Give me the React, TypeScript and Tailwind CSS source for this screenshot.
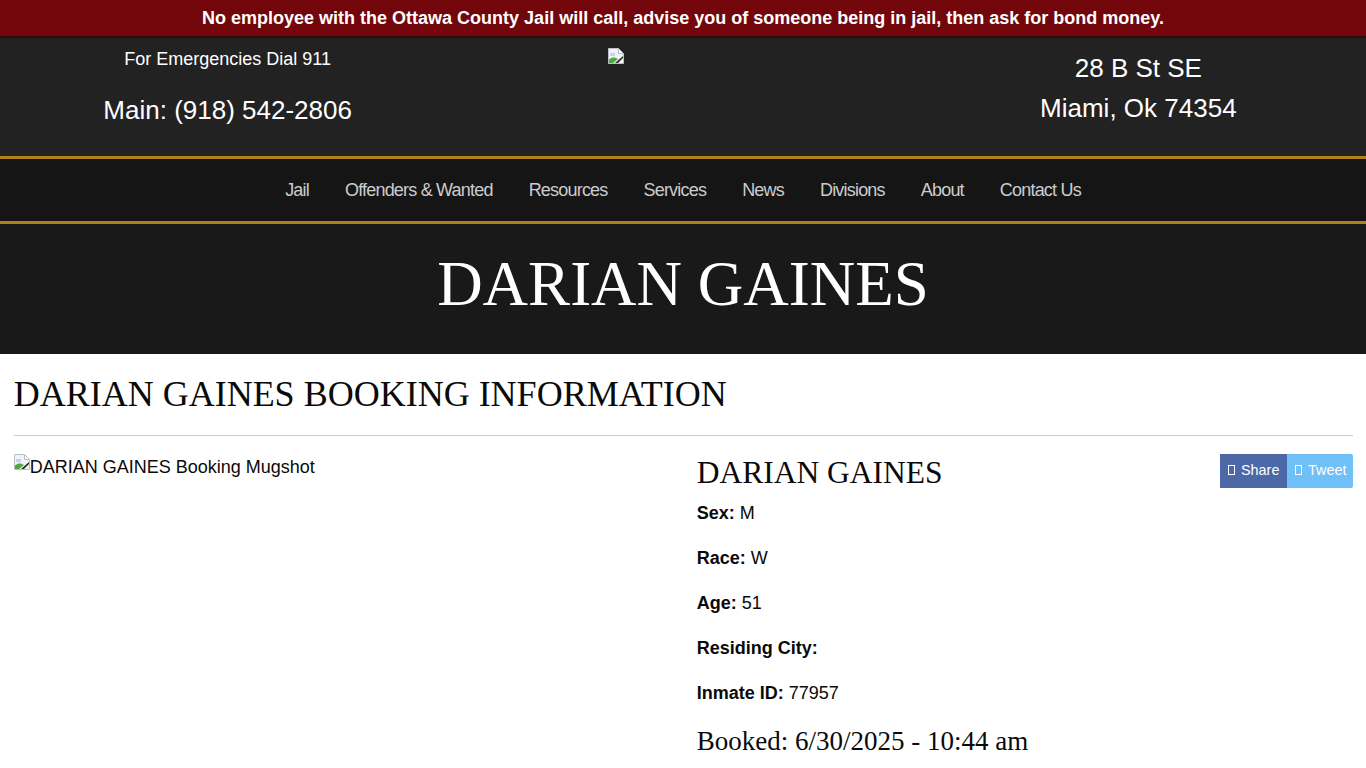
const navItems = ["Jail", "Offenders & Wanted", "Resources", "Services", "News", "Divisions", "About", "Contact Us"];

const details = [
  { label: "Sex:", value: "M" },
  { label: "Race:", value: "W" },
  { label: "Age:", value: "51" },
  { label: "Residing City:", value: "" },
  { label: "Inmate ID:", value: "77957" },
];

function BrokenImage() {
  return (
    <svg width="16" height="16" viewBox="0 0 16 16" className="shrink-0">
      <path d="M0.5 0.5H10.5L15.5 5.5V15.5H0.5Z" fill="#f1f3f8" stroke="#b9bfca" />
      <path d="M10.5 0.5V5.5H15.5Z" fill="#ffffff" stroke="#b9bfca" />
      <path d="M2 5h5v3H2z" fill="#c5d3ee" />
      <path d="M1 15V11.5C4 8.5 7 9 10 11L5 15Z" fill="#4fa83d" />
      <path d="M7 15L15 8V10L10 15Z" fill="#2c2c2c" />
    </svg>
  );
}

function Tofu() {
  return <span className="inline-block w-[7px] h-[10px] border border-white mr-[6px]" />;
}

export default function App() {
  return (
    <div className="font-['Liberation_Sans',Arial,sans-serif] bg-white text-[#0a0a0a]">
      <div className="h-[38px] bg-[#73060b] border-b-2 border-[#2a0a0b] text-white font-bold text-[18px] leading-[36px] text-center">
        No employee with the Ottawa County Jail will call, advise you of someone being in jail, then ask for bond money.
      </div>

      <header className="h-[118px] bg-[#222222] text-white grid grid-cols-3 text-center">
        <div>
          <p className="text-[18px] leading-[26px] mt-2">For Emergencies Dial 911</p>
          <p className="text-[26px] leading-[36px] mt-[20px]">Main: (918) 542-2806</p>
        </div>
        <div className="pt-[10px] pl-[153px]">
          <BrokenImage />
        </div>
        <div className="text-[26px] leading-[40px] pt-[10px]">
          <p>28 B St SE</p>
          <p>Miami, Ok 74354</p>
        </div>
      </header>

      <nav className="h-[68px] bg-[#151515] border-y-[3px] border-[#b27f1c] flex items-center justify-center gap-9 text-[18px] tracking-[-0.8px] text-[#cccccc]">
        {navItems.map((item) => (
          <span key={item}>{item}</span>
        ))}
      </nav>

      <div className="h-[130px] bg-[#191919] flex items-center justify-center pb-[10px]">
        <h1 className="font-['Liberation_Serif',serif] text-white text-[63px] leading-none">DARIAN GAINES</h1>
      </div>

      <main className="pl-[13.66px] pr-[13px]">
        <h2 className="font-['Liberation_Serif',serif] text-[36px] leading-[44px] pt-[18px] h-[82px] border-b border-[#cccccc]">
          DARIAN GAINES BOOKING INFORMATION
        </h2>
        <div className="grid grid-cols-2 gap-x-[26.66px] pt-[18px]">
          <div className="flex items-start text-[18px] leading-[26px]">
            <BrokenImage />
            <span>DARIAN GAINES Booking Mugshot</span>
          </div>
          <div>
            <div className="flex justify-between items-start">
              <h3 className="font-['Liberation_Serif',serif] text-[31.5px] leading-[37px]">DARIAN GAINES</h3>
              <div className="flex text-white text-[14.4px] h-[34px] leading-[32px]">
                <span className="bg-[#4c68a6] w-[67px] pl-2 pb-[2px] flex items-center">
                  <Tofu />
                  Share
                </span>
                <span className="bg-[#6fc0f7] w-[66px] pl-2 pb-[2px] rounded-r-[2px] flex items-center">
                  <Tofu />
                  Tweet
                </span>
              </div>
            </div>
            <div className="text-[18px] leading-[26px] mt-[9px]">
              {details.map((row) => (
                <p key={row.label} className="mb-[19px]">
                  <b>{row.label}</b> {row.value}
                </p>
              ))}
            </div>
            <p className="font-['Liberation_Serif',serif] text-[27px] leading-[34px] -mt-[1px]">
              Booked: 6/30/2025 - 10:44 am
            </p>
          </div>
        </div>
      </main>
    </div>
  );
}
